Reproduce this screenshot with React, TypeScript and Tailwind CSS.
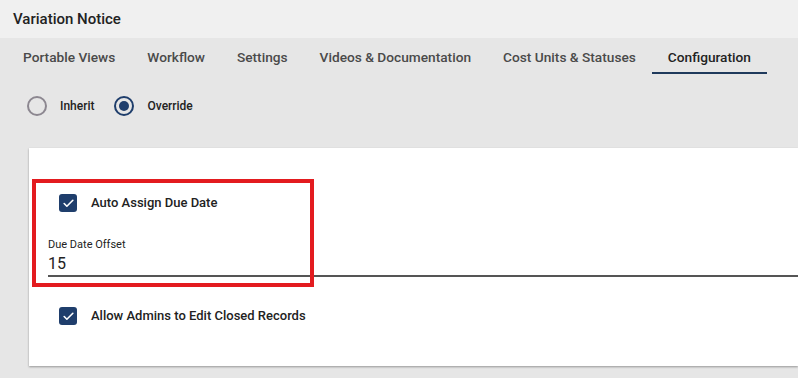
import { Check } from "lucide-react"

const tabs = [
  "Portable Views",
  "Workflow",
  "Settings",
  "Videos & Documentation",
  "Cost Units & Statuses",
  "Configuration",
]

function Checkbox({ label }: { label: string }) {
  return (
    <div className="flex h-[18px] items-center gap-[14px]">
      <span className="flex h-[18px] w-[18px] items-center justify-center rounded-[3px] bg-[#1f3e6c]">
        <Check className="h-[13px] w-[13px] text-white" strokeWidth={3} />
      </span>
      <span className="text-[13px] font-medium text-[#222]">{label}</span>
    </div>
  )
}

function Radio({ label, checked }: { label: string; checked?: boolean }) {
  return (
    <div className="flex items-center gap-[13px]">
      <span
        className={
          checked
            ? "flex h-[20px] w-[20px] items-center justify-center rounded-full border-2 border-[#1f3e6c]"
            : "flex h-[20px] w-[20px] items-center justify-center rounded-full border-2 border-[#8c8790]"
        }
      >
        {checked && <span className="h-[10px] w-[10px] rounded-full bg-[#1f3e6c]" />}
      </span>
      <span className="text-[12px] font-medium text-[#222]">{label}</span>
    </div>
  )
}

export default function App() {
  return (
    <div
      className="h-[378px] w-[798px] overflow-hidden bg-[#e6e6e6]"
      style={{ fontFamily: "Roboto, 'Noto Sans', sans-serif" }}
    >
      <div className="flex h-[38px] items-center bg-[#f0f0f0] px-[13px] text-[15px] font-medium text-[#222]">
        Variation Notice
      </div>

      <div className="flex h-[36px] pl-[7px]">
        {tabs.map((t) => (
          <div
            key={t}
            className={
              t === "Configuration"
                ? "flex items-center border-b-2 border-[#1f3a5c] px-[16px] pt-[4px] text-[13.7px] font-medium text-[#222]"
                : "flex items-center border-b-2 border-transparent px-[16px] pt-[4px] text-[13.7px] font-medium text-[#4a4a4a]"
            }
          >
            {t}
          </div>
        ))}
      </div>

      <div className="flex h-[62px] items-center gap-[20px] pl-[27px] pt-[2px]">
        <Radio label="Inherit" />
        <Radio label="Override" checked />
      </div>

      <div className="relative ml-[29px] mt-[12px] h-[218px] bg-white shadow-[0_1px_2px_rgba(0,0,0,0.35)]">
        <div className="pt-[46px] pl-[30px]">
          <Checkbox label="Auto Assign Due Date" />
        </div>
        <div className="mt-[26px] pl-[19px]">
          <div className="text-[11px] leading-[14px] text-[#222]">Due Date Offset</div>
          <div className="border-b-2 border-[#555] pb-[1px] pt-[1px] text-[16px] leading-[21px] text-[#222]">
            15
          </div>
        </div>
        <div className="mt-[30px] pl-[30px]">
          <Checkbox label="Allow Admins to Edit Closed Records" />
        </div>

        <div className="absolute left-[3px] top-[31px] h-[108px] w-[282px] border-4 border-[#e31b1f]" />
      </div>
    </div>
  )
}
